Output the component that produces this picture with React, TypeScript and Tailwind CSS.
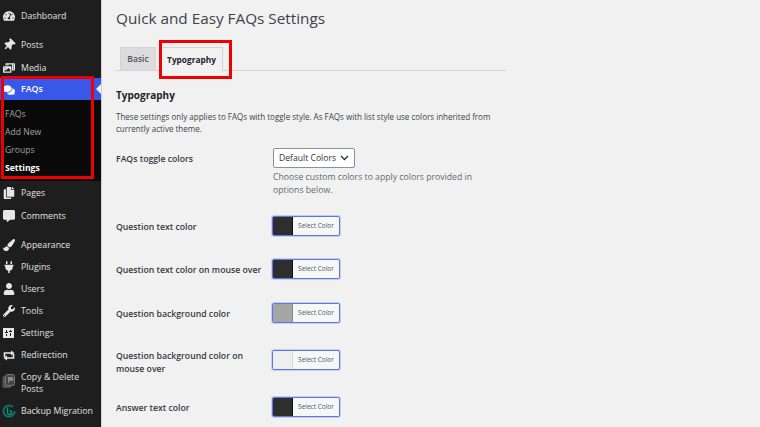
import React from "react";
import { FaThumbtack, FaPhotoVideo, FaComments, FaTachometerAlt, FaCopy, FaCommentAlt, FaPaintBrush, FaPlug, FaUser, FaWrench } from "react-icons/fa";

const SettingsIcon = () => (
  <svg width="12" height="12" viewBox="0 0 12 12"><path fill="#e8e8e8" d="M0 1h11v10H0z" /><path fill="#1e1e1e" d="M3 3h1v2h1v1H2V5h1zM3 7h1v2H3zM7 3h1v1h1v1H6V4h1zM7 6h1v3H7z" /></svg>
);
const RedirectIcon = () => (
  <svg width="12" height="11" viewBox="0 0 12 11" fill="none" stroke="#e8e8e8" strokeWidth="1.6"><path d="M1.500 7V3h7" /><path d="M10.500 4v4h-7" /><path fill="#e8e8e8" stroke="none" d="M8 .5L11.500 3 8 5.500zM4 5.500L.5 8 4 10.500z" /></svg>
);
const CopyPostIcon = () => (
  <svg width="14" height="15" viewBox="0 0 14 15"><rect x="0.5" y="2" width="9" height="12" rx="2" fill="#555" /><rect x="3.5" y="0.5" width="9" height="11" rx="2" fill="#444" stroke="#777" /><path d="M6 3h3.5a1.5 1.5 0 0 1 0 4H7v2H6z" fill="#888" /></svg>
);
const BackupIcon = () => (
  <svg width="14" height="14" viewBox="0 0 14 14"><circle cx="7" cy="7" r="5.6" fill="none" stroke="#0f6f66" strokeWidth="2" strokeDasharray="30 5" /><path d="M5.5 3.5v5a2 2 0 1 0 2-2" fill="none" stroke="#0f8f80" strokeWidth="1.4" /></svg>
);

function Item({ icon, label, cls = "" }: { icon: React.ReactNode; label: React.ReactNode; cls?: string }) {
  return (
    <div className={`flex items-center h-[22px] pt-[2px] ${cls}`}>
      <span className="w-[18px] flex justify-center text-[#e6e6e6] text-[12px]">{icon}</span>
      <span className="ml-[3px] text-[8.8px] text-[#e0e0e0] leading-[12px] whitespace-nowrap">{label}</span>
    </div>
  );
}

function Sub({ label, active }: { label: string; active?: boolean }) {
  return <div className={`h-[18px] pl-[5px] flex items-center text-[8.6px] ${active ? "font-bold text-white" : "text-[#a0a0a0]"}`}>{label}</div>;
}

function ColorRow({ label, color, sep, cls, labelCls = "pt-[5px]" }: { label: React.ReactNode; color: string; sep: string; cls: string; labelCls?: string }) {
  return (
    <div className={`flex items-start ${cls}`}>
      <div className={`w-[156px] text-[8.7px] font-semibold leading-[13px] text-[#33393f] ${labelCls}`}>{label}</div>
      <div className="w-[68px] h-[20px] flex border border-[#5f75e6] rounded-[2px] bg-[#f6f7f7] overflow-hidden shadow-[0_0_0_1px_rgba(106,127,232,0.3)]">
        <span className="w-[20px] h-full border-r" style={{ backgroundColor: color, borderColor: sep }} />
        <span className="flex-1 text-center text-[6.5px] leading-[18px] text-[#50575e]">Select Color</span>
      </div>
    </div>
  );
}

export default function App() {
  return (
    <div className="relative flex h-[427px] w-[760px] overflow-hidden bg-[#f1f1f1] font-['Open_Sans','Noto_Sans',sans-serif]">
      <aside className="w-[102px] shrink-0 bg-[#1e1e1e] border-r border-[#d0d0d0] pt-[4px]">
        <Item icon={<FaTachometerAlt />} label="Dashboard" cls="mb-[7px]" />
        <Item icon={<FaThumbtack className="rotate-45" />} label="Posts" cls="mb-[1px]" />
        <Item icon={<FaPhotoVideo />} label="Media" />
        <div className="relative flex items-center h-[22px] pt-[2px] bg-[#3858e9]">
          <span className="w-[18px] flex justify-center text-white text-[12px]"><FaComments /></span>
          <span className="ml-[3px] text-[8.8px] font-semibold text-white">FAQs</span>
          <span className="absolute right-0 top-[6px] w-0 h-0 border-y-[5px] border-y-transparent border-r-[5px] border-r-[#f1f1f1]" />
        </div>
        <div className="h-[81px] bg-[#0a0a0a] pt-[5px]">
          <Sub label="FAQs" />
          <Sub label="Add New" />
          <Sub label="Groups" />
          <Sub label="Settings" active />
        </div>
        <Item icon={<FaCopy />} label="Pages" cls="mb-[1px]" />
        <Item icon={<FaCommentAlt />} label="Comments" cls="mb-[7px]" />
        <Item icon={<FaPaintBrush />} label="Appearance" />
        <Item icon={<FaPlug />} label="Plugins" />
        <Item icon={<FaUser />} label="Users" />
        <Item icon={<FaWrench />} label="Tools" />
        <Item icon={<SettingsIcon />} label="Settings" />
        <Item icon={<RedirectIcon />} label="Redirection" />
        <div className="flex items-start h-[34px] pt-[6px]">
          <span className="w-[18px] flex justify-center pt-[3px]"><CopyPostIcon /></span>
          <span className="ml-[3px] text-[8.8px] text-[#e0e0e0] leading-[12px]">Copy &amp; Delete<br />Posts</span>
        </div>
        <Item icon={<BackupIcon />} label="Backup Migration" />
      </aside>

      <main className="pl-[14px] w-[404px]">
        <h1 className="pt-[7px] text-[15.3px] leading-[22px] text-[#3c434a]">Quick and Easy FAQs Settings</h1>
        <div className="mt-[18px] flex items-end h-[24px] border-b border-[#d4d4d4] pl-[4px] gap-[4px]">
          <div className="w-[36px] h-[23px] bg-[#dcdcde] border border-[#d4d4d4] border-b-0 text-center text-[8.6px] font-semibold leading-[22px] text-[#50575e]">Basic</div>
          <div className="w-[63px] h-[24px] -mb-[1px] bg-[#f1f1f1] border border-[#d4d4d4] border-b-0 text-center text-[8.3px] font-bold leading-[23px] text-[#1d2327]">Typography</div>
        </div>
        <h2 className="mt-[16px] text-[10px] font-bold leading-[16px] text-[#1d2327]">Typography</h2>
        <p className="mt-[8px] text-[8.03px] leading-[12px] text-[#3c434a]">These settings only applies to FAQs with toggle style. As FAQs with list style use colors inherited from<br />currently active theme.</p>
        <div className="flex mt-[13px]">
          <div className="w-[157px] pt-[5px] text-[8.7px] font-semibold leading-[13px] text-[#33393f]">FAQs toggle colors</div>
          <div>
            <div className="w-[82px] h-[20px] flex items-center justify-between pl-[5px] pr-[5px] bg-white border border-[#8c8f94] rounded-[2px] text-[8.6px] text-[#2c3338]">
              Default Colors
              <svg width="9" height="6" viewBox="0 0 9 6"><path d="M1 1l3.5 3.5L8 1" fill="none" stroke="#2c3338" strokeWidth="1.3" /></svg>
            </div>
            <p className="mt-[3px] w-[215px] text-[8.7px] leading-[13px] text-[#646970]">Choose custom colors to apply colors provided in options below.</p>
          </div>
        </div>
        <ColorRow cls="mt-[19px]" label="Question text color" color="#2e2e2e" sep="#111" />
        <ColorRow cls="mt-[23px]" label="Question text color on mouse over" color="#2e2e2e" sep="#111" />
        <ColorRow cls="mt-[24px]" label="Question background color" color="#a6a6a6" sep="#8c8c8c" />
        <ColorRow cls="mt-[27px]" labelCls="pt-0" label={<>Question background color on<br />mouse over</>} color="#eeeeee" sep="#d8d8d8" />
        <ColorRow cls="mt-[21px]" label="Answer text color" color="#2e2e2e" sep="#111" />
      </main>

      <div className="absolute left-[1px] top-[76px] w-[93px] h-[103px] border-[3px] border-[#f00000] pointer-events-none" />
      <div className="absolute left-[159px] top-[40px] w-[73px] h-[39px] border-[3px] border-[#f00000] pointer-events-none" />
    </div>
  );
}
